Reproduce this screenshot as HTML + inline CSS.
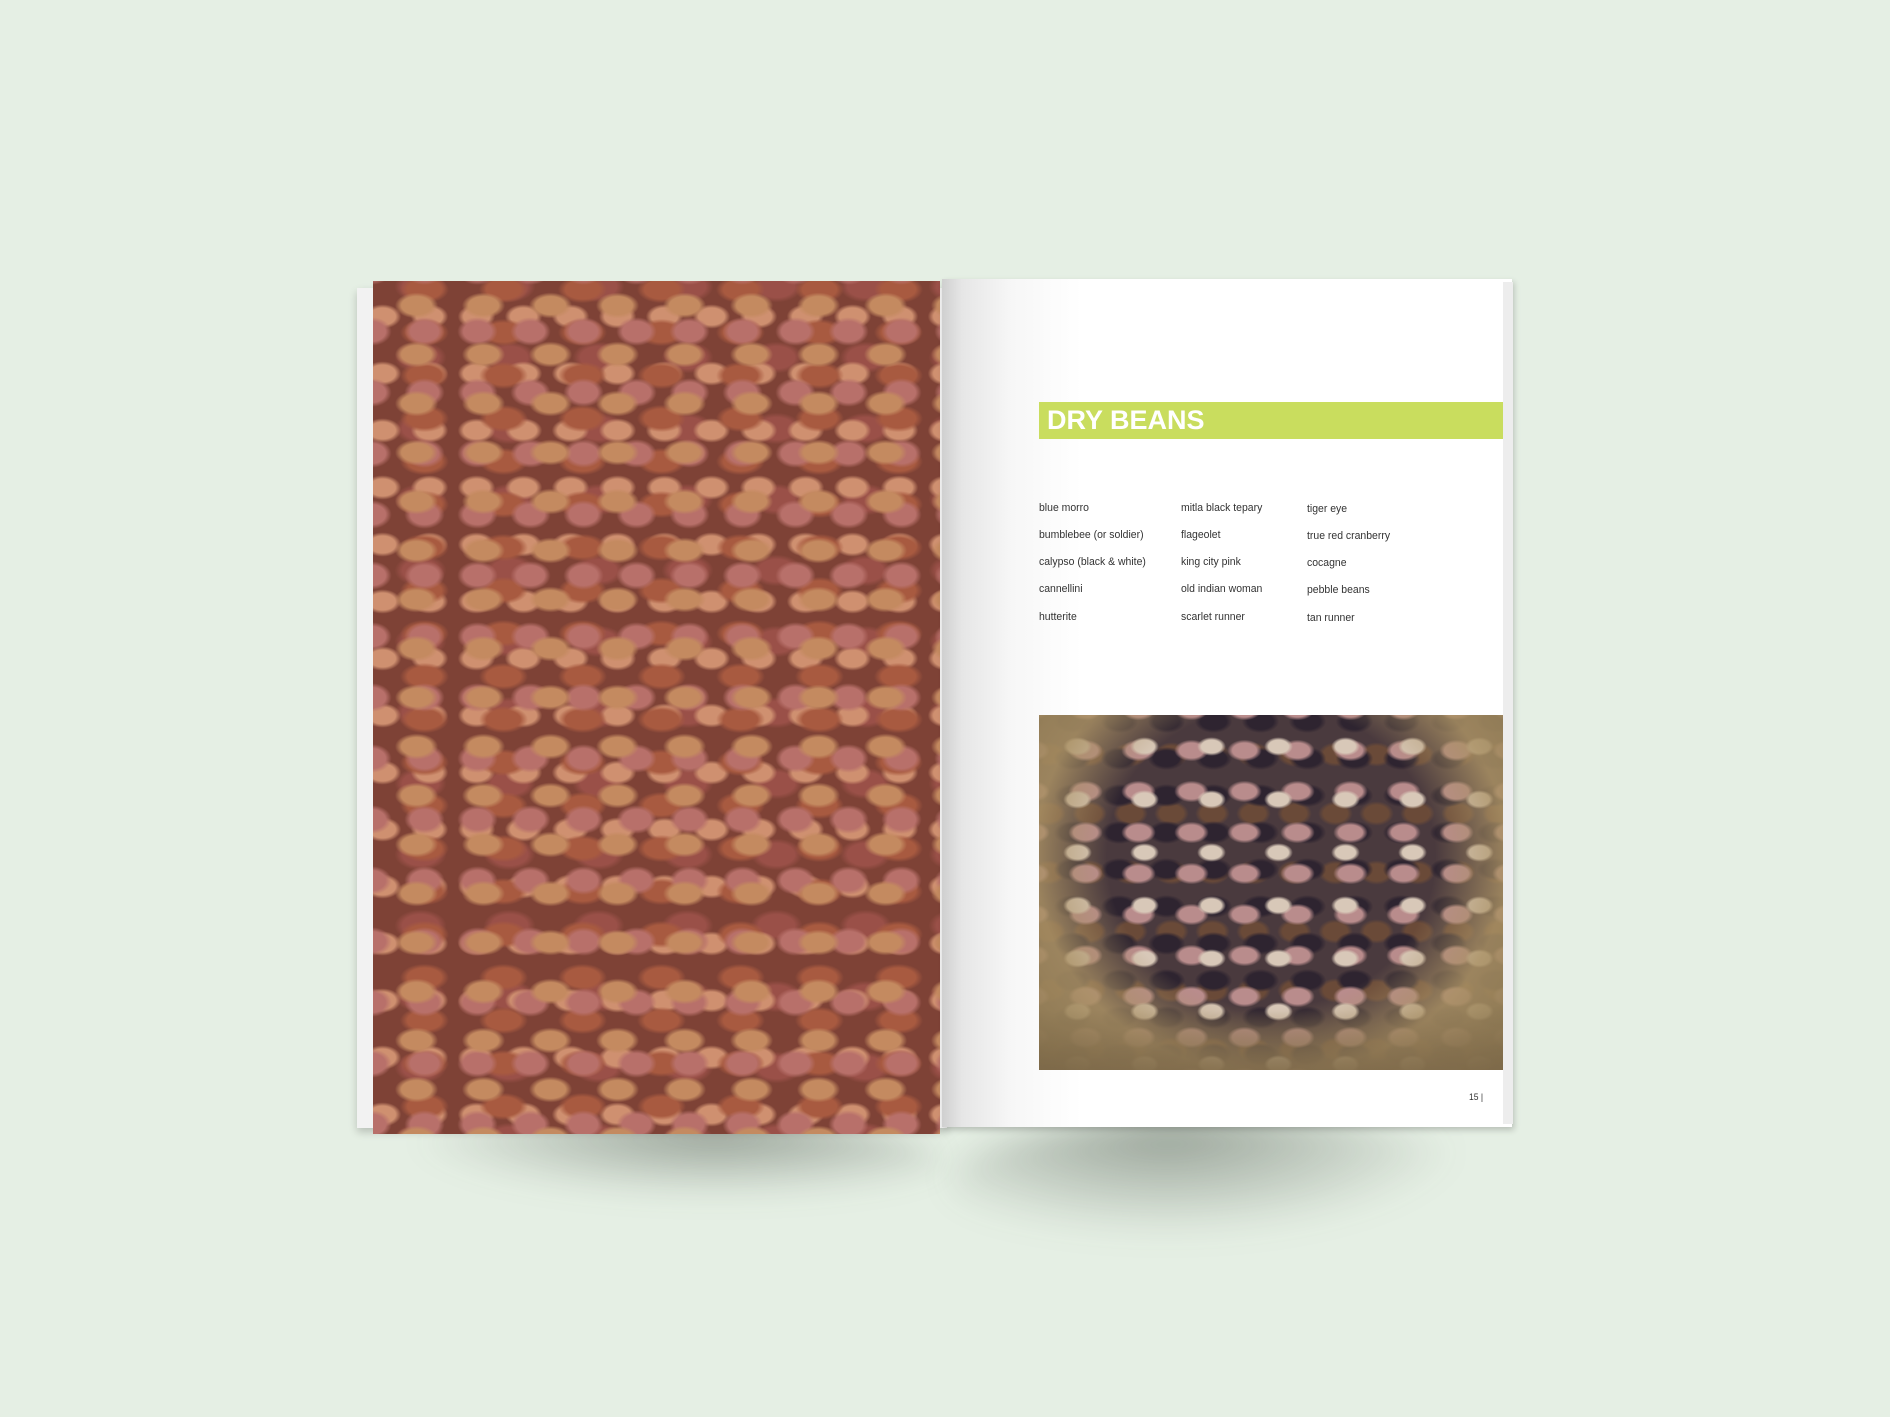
<!DOCTYPE html>
<html><head><meta charset="utf-8"><style>
html,body{margin:0;padding:0}
body{width:1890px;height:1417px;background:#e5efe4;position:relative;overflow:hidden;font-family:"Liberation Sans",sans-serif}
.sh1{position:absolute;left:380px;top:1115px;width:560px;height:90px;border-radius:50%;background:radial-gradient(ellipse at 60% 20%,rgba(60,70,60,.45),rgba(60,70,60,0) 65%);filter:blur(14px)}
.sh2{position:absolute;left:950px;top:1115px;width:540px;height:130px;border-radius:50%;background:radial-gradient(ellipse at 40% 15%,rgba(60,70,60,.45),rgba(60,70,60,0) 65%);filter:blur(16px)}
.lpage{position:absolute;left:357px;top:288px;width:590px;height:840px;background:#f2f2f2;box-shadow:0 4px 8px rgba(0,0,0,.2)}
.limg{position:absolute;left:373px;top:281px;width:567px;height:853px;
background:
radial-gradient(ellipse 30px 18px at 50% 50%,#c48a60 50%,transparent 72%),
radial-gradient(ellipse 28px 20px at 50% 50%,#b8706a 50%,transparent 72%),
radial-gradient(ellipse 34px 19px at 50% 50%,#a85a40 50%,transparent 72%),
radial-gradient(ellipse 26px 17px at 50% 50%,#cf9070 50%,transparent 72%),
radial-gradient(ellipse 36px 22px at 50% 50%,#9a5048 50%,transparent 72%),
#7e4236;
background-size:67px 49px,53px 61px,79px 43px,47px 57px,89px 71px;
background-position:10px 0,25px 20px,12px 30px,33px 7px,3px 41px}
.rpage{position:absolute;left:942px;top:279px;width:570px;height:848px;background:linear-gradient(90deg,#cfcfcf 0,#e6e6e6 20px,#f7f7f7 70px,#fff 140px);box-shadow:2px 3px 6px rgba(0,0,0,.2)}
.redge{position:absolute;left:1503px;top:282px;width:10px;height:842px;background:#ededed}
.bar{position:absolute;left:1039px;top:402px;width:464px;height:37px;background:#c9dd5e}
.bar span{position:absolute;left:8px;top:3px;color:#fff;font-weight:bold;font-size:27px;letter-spacing:0}
.t{position:absolute;font-size:11px;color:#333;transform:scaleX(.95);transform-origin:left}
.bimg{position:absolute;left:1039px;top:715px;width:464px;height:355px;
background:
radial-gradient(ellipse at 50% 40%,rgba(0,0,0,0) 50%,rgba(170,145,100,.85) 72%,#8a7650 100%),
radial-gradient(ellipse 20px 13px at 50% 50%,#d8c8b8 50%,transparent 72%),
radial-gradient(ellipse 24px 15px at 50% 50%,#b98c8c 50%,transparent 72%),
radial-gradient(ellipse 26px 16px at 50% 50%,#2e2430 50%,transparent 72%),
radial-gradient(ellipse 24px 17px at 50% 50%,#6a4a38 50%,transparent 72%),
#4a3a3e;
background-size:100% 100%,67px 53px,53px 41px,47px 37px,41px 59px;
background-position:0 0,5px 5px,20px 15px,10px 25px,30px 10px}
.bimg:after{content:"";position:absolute;left:0;right:0;bottom:0;height:60px;background:linear-gradient(rgba(120,100,70,0),rgba(120,100,70,.7))}
</style></head><body>
<div class="sh1"></div>
<div class="sh2"></div>
<div class="lpage"></div>
<div class="limg"></div>
<div class="rpage"></div>
<div class="redge"></div>
<div class="bar"><span>DRY BEANS</span></div>
<div class="t" style="left:1039px;top:502px">blue morro</div>
<div class="t" style="left:1039px;top:529px">bumblebee (or soldier)</div>
<div class="t" style="left:1039px;top:556px">calypso (black &amp; white)</div>
<div class="t" style="left:1039px;top:583px">cannellini</div>
<div class="t" style="left:1039px;top:611px">hutterite</div>
<div class="t" style="left:1181px;top:502px">mitla black tepary</div>
<div class="t" style="left:1181px;top:529px">flageolet</div>
<div class="t" style="left:1181px;top:556px">king city pink</div>
<div class="t" style="left:1181px;top:583px">old indian woman</div>
<div class="t" style="left:1181px;top:611px">scarlet runner</div>
<div class="t" style="left:1307px;top:503px">tiger eye</div>
<div class="t" style="left:1307px;top:530px">true red cranberry</div>
<div class="t" style="left:1307px;top:557px">cocagne</div>
<div class="t" style="left:1307px;top:584px">pebble beans</div>
<div class="t" style="left:1307px;top:612px">tan runner</div>
<div class="bimg"></div>
<div class="t" style="left:1469px;top:1092px;font-size:9px">15 |</div>
</body></html>
